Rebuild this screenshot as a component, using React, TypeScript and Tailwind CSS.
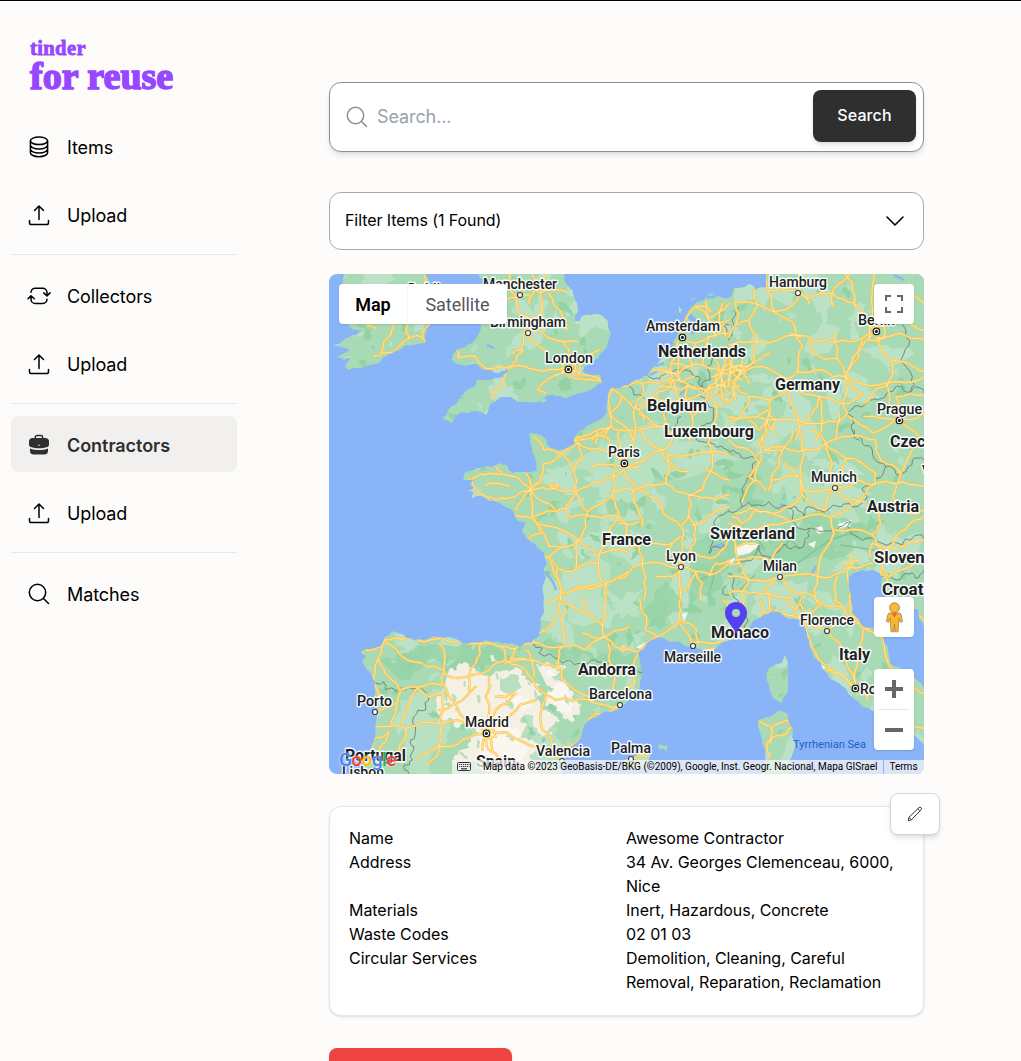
import React from "react";

const LAND = [
  "M345 274 344 290 352 300 340 312 351 328 362 331 352 335 342 342 334 344 345 348 350 350 342 354 336 357 344 360 352 358 345 366 349 370 356 368 379 363 386 356 392 353 406 345 426 343 430 325 431 290 425 274Z",
  "M478 274 492 284 470 290 481 325 479 333 472 343 457 350 452 360 462 365 476 364 486 370 499 373 509 369 502 377 489 380 477 380 474 387 467 390 457 403 448 411 442 418 446 420 452 423 455 416 462 412 474 411 486 415 492 403 501 397 511 397 520 402 529 402 542 400 548 395 558 396 569 397 586 392 602 383 601 375 590 375 582 372 584 367 592 362 599 357 607 347 611 333 607 320 596 314 585 315 581 317 580 321 575 321 578 312 577 303 573 291 567 285 564 274Z",
  "M766 274 766 287 756 290 749 284 740 288 734 288 730 297 718 296 706 298 696 303 686 313 684 323 680 330 676 338 667 353 662 359 654 367 647 375 636 380 629 385 611 388 607 413 598 421 589 425 578 432 574 440 574 445 562 450 555 449 549 447 546 440 542 435 529 434 532 447 535 458 537 470 528 472 522 472 512 473 507 465 499 463 492 467 486 466 475 469 464 473 463 480 474 480 470 484 474 488 466 490 474 493 472 498 482 496 490 501 496 502 504 506 512 510 515 517 522 522 526 522 522 532 526 538 531 542 537 547 544 553 545 559 547 563 544 570 546 577 544 597 541 627 537 638 531 643 519 647 506 643 490 641 476 642 466 644 458 640 442 638 424 640 406 638 402 634 394 631 384 638 379 647 370 649 361 652 366 656 362 661 366 668 372 677 374 697 376 723 371 750 364 774 562 774 558 766 565 758 576 743 589 720 600 714 622 708 640 687 643 672 638 653 647 643 663 638 680 642 693 647 710 652 723 642 743 633 752 622 763 615 772 611 780 612 800 620 807 633 810 646 813 655 821 663 827 673 837 682 847 690 857 701 868 708 887 712 902 730 915 735 924 745 924 688 905 675 890 663 888 648 883 637 873 628 860 623 852 613 851 597 849 577 862 570 876 571 879 573 881 583 886 594 888 604 900 598 918 610 924 627 924 274Z",
  "M785 655 788 669 788 682 782 703 772 697 767 681 769 668 782 663Z",
  "M780 710 788 714 793 729 790 760 793 774 763 774 766 750 758 727 758 720 770 717Z",
  "M624 760 640 752 650 755 646 764 635 770 624 768ZM658 744 668 746 667 751 659 749ZM540 401 545 398 547 401 542 403Z",
  "M679 306 682 310 680 314 679 311ZM690 299 696 297 692 300ZM707 295 715 294 710 296Z",
].join(" ");

type Layer = { x: number; y: number; roads: string; borders: string };

const LAYERS: Layer[] = [
  {
    x: 329,
    y: 270,
    roads:
      "M288 12 286 45M195 165 185 195 165 215 155 250 190 248 225 215 240 205 275 200 292 213M235 165 232 185 240 205M300 165 280 185 280 205M135 257 155 255M385 240 388 263 440 260 450 278 470 295 510 292 550 290 600 293M487 387 497 362 520 345 530 310 555 280 580 245 585 190 600 165M540 12 545 60 562 95 570 130 600 140M115 165 140 175M550 250 580 240M530 90 600 75M555 30 570 60 600 50",
    borders: "",
  },
  {
    x: 529,
    y: 270,
    roads:
      "M0 40 35 70 60 60 110 65M50 12 35 70 40 120 25 180 0 190M10 12 20 50 0 100M60 70 75 105 100 140 115 180M0 190 30 230 60 260M10 180 60 205 105 215 145 215M40 120 20 150 0 140M105 215 120 260 118 298M118 298 60 298 0 295M118 298 60 325 35 345 25 360 50 370M118 298 160 315 195 320 220 335 170 330 120 315M118 298 145 270 190 250 210 240M145 260 145 320M95 270 100 310 135 310 140 285M460 200 465 160 480 130 500 110 530 110 545 125M530 95 545 160 560 200M500 110 540 145 600 100M545 160 600 150M460 200 500 220 540 200 600 190M460 200 435 240 425 290 430 320 420 340M435 240 470 250 510 240 550 245 600 235M430 280 470 290 520 285 600 300M370 300 430 310M500 220 480 260 490 300M540 200 525 250 520 285M580 100 570 150 590 200M430 320 380 340 340 340 280 350 245 360 240 420 245 470 180 495 135 505M245 360 280 380 310 410 330 420 345 450M340 340 345 370 320 410M430 330 410 360 370 380 330 420M430 330 480 345 530 360 560 350 600 330M430 330 440 370 470 400 530 400M370 380 440 395 500 380 530 360M320 410 320 470 310 510M330 430 370 460 410 470 450 500M280 380 240 430 290 470 310 510M245 470 300 480 350 475 410 470M490 440 520 400 540 350 575 310M540 350 560 410 555 460 545 510M475 345 470 400 490 440 480 510M560 410 600 390M575 310 585 350 600 370M560 270 575 310 600 280M410 300 455 335 495 320M400 410 410 470M190 510 245 470 220 500M550 320 600 315M560 340 600 350M570 300 560 370 600 390M590 270 580 380M400 310 450 310 480 290M450 260 450 330M390 350 450 360 500 350",
    borders:
      "M300 345 315 375 345 385M355 315 370 325 390 328 410 312 430 305 470 300 490 315 510 320 520 350 545 330 535 290 550 270 545 240M520 350 515 380 555 415 545 460 510 480M410 430 410 480 440 465 455 440M600 190 585 170 600 165",
  },
  {
    x: 729,
    y: 270,
    roads:
      "M110 12 115 60 135 125 190 155 200 195 220 230 205 305M15 95 75 100 135 125 205 90 210 70 240 85 310 70 315 110M20 165 60 150 85 110 75 60M210 70 150 60 115 60M210 12 215 70 240 100M310 70 330 40 360 15M310 70 375 100 400 130 440 180M350 12 370 60 378 110M435 12 430 60 440 185M0 225 60 215 85 215 200 195 260 215 320 215 400 205 440 185M440 205 585 207M450 200 475 260 490 275 475 345M400 210 390 260 350 320 340 400 355 430M440 185 400 230 360 300M320 190 320 215 325 265 250 250 240 215M325 265 350 320 450 345 510 335 585 320M490 270 540 280 585 305M0 295 60 290 90 270 120 250M85 215 75 270 40 300 15 330M0 310 100 290 170 325 205 305 280 300 350 320M350 320 400 370 360 400 270 380 190 350 170 325M190 350 120 390 115 450 100 510M120 390 60 380 15 350 0 400M180 365 200 430 210 480 200 510M270 380 250 430 210 470M270 380 280 450 260 510M355 430 280 460 115 450 0 440M320 510 330 430M475 345 480 400 510 450M405 440 510 450 585 430M510 450 570 500M510 450 430 490 360 440M510 450 500 380 585 375M475 345 430 370 405 400M0 270 30 300 60 340M10 260 0 330 30 350M15 330 40 310 20 290 0 350M60 380 40 430 0 460M20 100 20 165 0 200M60 150 85 215M60 450 90 480 115 450 140 490M500 60 585 100M520 100 540 160 585 180M0 300 40 330M0 285 35 285 50 310M40 270 30 320 10 350 20 390M85 440 115 420 140 450 130 480M185 190 215 200M420 160 465 170 465 205 420 210 420 160",
    borders:
      "M20 100 20 130 10 155 10 180 0 210M355 430 375 460 370 480 390 510M360 425 375 410 400 410 430 390 460 385 490 365 500 350 520 350 530 365 545 365 560 350 585 370M520 165 530 200 525 250 550 320 545 365",
  },
  {
    x: 529,
    y: 430,
    roads:
      "M15 20 45 60 100 70 135 120 135 180M10 180 35 155 45 100 100 70 150 40 135 30 200 15 240 30 285 100M10 180 75 175 140 185 190 160 285 120M140 185 110 235 50 245 10 265 40 305 0 325M140 185 155 220 175 245 250 195 255 120M110 235 125 262 180 258 260 258 290 280 290 310M175 245 170 290 150 330 110 350 60 350 40 305M10 265 70 290 150 330M150 330 200 375 210 375 215 450 232 465 230 510M265 265 235 320 210 375M250 195 270 265M250 185 310 180 345 170M285 120 300 150 345 185 400 240 445 275 458 290M310 180 315 215 340 290M345 165 410 160 480 195 520 180 530 150M285 115 350 90 400 60 350 30 340 0M285 100 310 50 320 0M285 100 200 55 150 40M270 0 275 60 285 100M200 40 205 0M400 60 435 110 475 125M400 60 430 20 440 0M415 75 480 75 540 68 600 75M415 70 410 160M545 0 550 70 530 150M530 120 600 150M480 195 480 240 458 290 460 350 455 410M480 260 500 290 500 330 480 370 455 410M480 195 560 210 600 195M490 285 540 260 600 230M455 410 400 400 340 400 330 350 290 310M455 410 455 510M455 410 500 425 540 435 600 400M500 425 520 460 515 510M340 400 350 440 345 510M232 465 290 440 340 400M232 465 150 470 100 490 80 440 60 380 100 350M85 415 140 420 175 400 210 400M140 420 145 330M458 380 500 370 560 380M365 340 430 340 455 320M215 370 290 365 335 345M270 280 330 275M430 340 410 370 440 400M500 430 480 470 455 490M540 435 560 400 600 390M560 380 590 350 600 310M380 440 430 440 455 420M150 40 160 80 135 120M190 110 255 105 330 110M75 175 60 165 90 165 75 175",
    borders: "M500 25 520 35 540 30 560 50 580 50 600 60M600 240 580 255 560 290 545 350 540 370 555 350 590 345M590 470 580 490 600 495",
  },
  {
    x: 329,
    y: 430,
    roads:
      "M430 145 480 130 560 140 605 180M420 145 450 190 500 210 560 200 605 180M470 165 540 168M605 180 610 260M605 180 560 240M605 180 680 240M500 110 520 130M605 180 590 130M640 150 605 180M560 255 615 265 640 310M650 380 685 410 695 500 660 590 610 640M690 500 740 535 815 580 825 620 770 660 700 650 610 635M710 535 705 640M710 490 760 475 830 460 900 425M830 460 830 560 820 590M825 620 870 600 900 590M825 620 870 655 900 655M837 640 840 690 855 720 850 780M760 505 775 545M760 610 825 620M655 520 690 500M610 640 560 655 520 650 460 640 400 635 340 625 230 625 165 630 150 680 135 740 140 840 130 950 150 1000M165 630 205 660 220 680 280 700M110 660 165 640M150 690 180 740 210 780 340 765 345 720 330 640M285 705 340 720M345 730 430 735 480 720 530 690 520 650M455 640 440 700 420 780M530 690 600 740 620 770 680 810 780 810 870 830M525 700 600 690 690 715 700 715M590 660 610 690 615 740M550 685 590 685M560 655 545 690M700 715 700 750 780 800M480 740 470 800 475 900M475 905 380 820 345 765M330 840 380 820 440 770M475 905 500 840 560 790M475 905 540 860 620 810M640 900 640 830 650 800M475 905 400 930 330 950 270 980M475 905 480 960 530 1020M475 905 580 935 640 960 700 990M640 900 680 970 740 940 800 850 870 830M140 890 230 895 330 880 340 790 300 800 265 775M265 775 240 830 220 880M215 785 200 840 185 880M230 895 210 960 220 1000M330 880 440 880 475 905M340 880 330 960 300 1000M500 800 560 790M455 890 495 890 500 920 470 930 455 890M460 960 475 905 490 960M130 930 180 905 150 960M135 760 150 790 140 840 200 820M685 720 690 660 700 650",
    borders:
      "M605 640 640 655 630 670 690 690 700 700 750 700 800 690 820 700 850 715M120 780 140 760 165 755 170 780 200 785 230 780 270 770 300 800 290 840 255 860 260 900 245 930 255 950 250 990 225 1005 240 1030",
  },
  {
    x: 729,
    y: 430,
    roads:
      "M0 30 60 60 90 100 80 150 50 190 40 215M115 0 90 40 90 100M210 0 225 70 215 150 220 195 185 230M100 20 110 60 210 65 290 40 360 20 440 30M290 40 250 0M290 40 350 85 440 130 440 160 500 160 585 170M290 40 310 100 318 170M160 60 190 0M110 60 160 60 150 110 120 180M130 150 210 140 165 100M215 150 220 180 318 175M318 175 290 240 220 195M318 175 350 210 410 215M350 85 330 130 318 170M318 175 390 150 440 160M440 160 400 200 350 240 305 262 180 275 130 250M20 250 60 235 130 250 180 230M0 280 50 300 180 275M10 260 40 280 80 240 120 250M305 262 315 310 270 400 265 440M315 300 430 315 455 280 450 250M430 315 460 370 500 320 560 270 585 260M585 330 430 340 425 380M0 440 60 450 153 440 270 440 330 430 400 410 430 400M153 440 110 480 120 540M153 440 200 490 300 530 350 535M30 400 60 450 40 490 50 540M265 440 265 520M325 440 320 510M365 370 370 400 355 440 360 520M340 400 390 390M460 400 480 440 560 400 585 395M0 490 60 490 120 490 190 500M155 440 120 390 20 390M130 385 160 340M455 90 515 130 550 60M440 30 455 90M500 160 490 200 550 250M90 100 60 140 110 180M510 120 510 160M540 250 585 240M20 350 80 340M0 400 30 400 20 340 0 320M220 500 200 540M460 380 455 430 480 470",
    borders:
      "M0 65 30 70 50 85 85 85 70 110 50 160 40 230 0 245M40 230 80 225 120 215 150 235 185 235 215 245 225 260 240 230 270 240 330 230 360 220 405 215 415 200 400 175 440 160 440 145 470 110 455 100 430 60 400 40 375 0M470 110 500 130 520 130 550 90 585 90M20 385 40 395 80 370 90 345 130 385 160 345 180 355 210 355 240 320 240 295 200 290 190 270 185 235M240 295 270 305 330 290 365 275 355 290 375 315 430 325 520 345 550 325 585 325M460 440 480 435 490 445 530 430 560 445 585 420M0 430 15 450 10 490 20 540",
  },
  {
    x: 620,
    y: 600,
    roads:
      "M0 150 55 155 110 110 180 60 180 0M180 70 215 130 300 125 345 95 400 80 430 35 470 30 540 55 560 60 570 120 590 165 620 200 705 265 745 300M60 0 80 50 75 90 110 110M180 60 230 90 235 130M540 55 500 0M560 60 620 90 660 130 680 190 705 265M620 90 700 60 790 120 805 190 820 210M690 0 690 40 750 90M610 10 560 40 540 10M620 210 660 220 705 265M55 160 45 250 0 290M420 365 455 385 500 360 515 380 500 400 440 430 450 470M455 385 450 430M885 265 912 280M885 380 912 385M730 90 710 200 705 265M310 0 340 50M430 35 420 0M20 480 60 465 80 470M640 0 700 60M840 0 880 20 912 60M230 150 290 145",
    borders: "M55 215 70 215M360 100 380 70 370 30",
  },
];

/* Midpoint displacement: turns coarse polylines into natural looking ones.
   Axis-aligned segments are kept straight, as they run along the map's frame. */
function roughen(path: string, amount: number, minLength: number, depth: number, keepAxes = false) {
  const noise = (a: number, b: number) => {
    const v = Math.sin(a * 12.9898 + b * 78.233) * 43758.5453;
    return v - Math.floor(v) - 0.5;
  };
  const split = (x1: number, y1: number, x2: number, y2: number, d: number): string => {
    const dx = x2 - x1;
    const dy = y2 - y1;
    if (d === 0 || Math.hypot(dx, dy) < minLength) return ` ${x2.toFixed(1)} ${y2.toFixed(1)}`;
    if (keepAxes && (dx === 0 || dy === 0)) return ` ${x2} ${y2}`;
    const k = noise(x1 + x2, y1 + y2) * amount;
    const mx = (x1 + x2) / 2 - dy * k;
    const my = (y1 + y2) / 2 + dx * k;
    return split(x1, y1, mx, my, d - 1) + split(mx, my, x2, y2, d - 1);
  };
  return path
    .split("M")
    .filter((s) => s.trim())
    .map((s) => {
      const closed = s.includes("Z");
      const n = s.replace("Z", "").trim().split(/\s+/).map(Number);
      let out = `M${n[0]} ${n[1]}`;
      for (let i = 2; i < n.length; i += 2) out += split(n[i - 2], n[i - 1], n[i], n[i + 1], depth);
      return closed ? out + "Z" : out;
    })
    .join("");
}

/* Deterministic patches scattered over a rectangle of the map. */
function patches(seed: number, count: number, min: number, max: number, box = [329, 274, 595, 500]) {
  let s = seed;
  const rnd = () => {
    s = (s * 16807) % 2147483647;
    return s / 2147483647;
  };
  const out: string[] = [];
  for (let i = 0; i < count; i++) {
    const cx = box[0] + rnd() * box[2];
    const cy = box[1] + rnd() * box[3];
    const r = min + rnd() * (max - min);
    const tilt = rnd() * 3.14;
    const pts: string[] = [];
    for (let k = 0; k < 13; k++) {
      const a = (k / 13) * Math.PI * 2;
      const q = r * (0.45 + rnd() * 0.75);
      const px = Math.cos(a) * q * 1.5;
      const py = Math.sin(a) * q * 0.7;
      pts.push(
        `${(cx + px * Math.cos(tilt) - py * Math.sin(tilt)).toFixed(1)} ${(cy + px * Math.sin(tilt) + py * Math.cos(tilt)).toFixed(1)}`,
      );
    }
    out.push(`M${pts.join(" ")}Z`);
  }
  return out.join("");
}

const COAST = roughen(LAND, 0.3, 5, 2, true);
const NETWORK = LAYERS.map((l) => ({
  ...l,
  roads: roughen(l.roads, 0.28, 18, 2),
  borders: roughen(l.borders, 0.6, 10, 2),
}));

const LIGHT = patches(71, 170, 6, 22);
const DARK = patches(913, 260, 1.5, 7);
const PALE = patches(4021, 190, 1.5, 6);

const LOWLANDS = roughen(
  "M540 480 575 470 610 475 600 500 590 560 560 580 545 600 600 620 610 580 640 500 680 480 720 440 650 420 610 440ZM780 460 850 470 860 520 790 515ZM750 590 800 585 850 600 845 620 780 600ZM400 700 440 690 450 720 430 774 410 774Z",
  0.6,
  5,
  3,
);

const MOUNTAINS = roughen(
  "M540 645 580 650 640 655 630 670 600 665 560 660ZM380 660 430 645 500 650 510 660 440 662 400 680ZM605 500 622 498 628 510 625 518 608 516ZM740 500 752 470 762 478 750 505ZM690 560 740 530 800 525 870 530 880 550 830 560 760 560 720 590 690 610ZM640 610 665 580 680 610 660 630Z",
  0.6,
  5,
  3,
);

const PLATEAU = roughen(
  "M449 670 462 664 475 668 482 675 500 672 512 670 526 676 540 684 535 700 548 712 560 720 552 735 537 728 530 715 520 722 524 735 536 745 530 758 540 774 460 774 455 755 470 748 480 735 470 722 456 728 448 718 437 712 442 690 445 684ZM536 664 548 662 556 668 566 684 560 694 546 684ZM548 690 566 680 574 700 580 714 572 724 560 712 545 706ZM556 662 566 668 558 672ZM620 648 627 644 624 652ZM490 655 498 662 492 662Z",
  0.8,
  3,
  3,
);

const PLATEAU_LIGHT = roughen(
  "M480 740 495 728 520 735 528 750 510 765 480 765ZM545 695 568 688 572 712 555 705ZM506 695 520 688 530 700 512 708ZM543 668 552 670 556 680 548 678Z",
  0.8,
  3,
  3,
);

const PLATEAU_GREEN =
  roughen("M500 676 515 674 520 685 512 696 500 690Z", 0.7, 3, 3) + patches(557, 26, 1.5, 5, [445, 670, 125, 90]);

type Kind = "city" | "country" | "sea";
const LABELS: [string, number, number, number, Kind][] = [
  ["Dublin", 408, 294, 40, "city"],
  ["Manchester", 483, 289, 74, "city"],
  ["Birmingham", 490, 327, 76, "city"],
  ["London", 545, 363, 48, "city"],
  ["Amsterdam", 646, 331, 74, "city"],
  ["Netherlands", 658, 356, 88, "country"],
  ["Hamburg", 769, 287, 58, "city"],
  ["Berlin", 858, 325, 37, "city"],
  ["Germany", 775, 389, 65, "country"],
  ["Belgium", 647, 410, 60, "country"],
  ["Luxembourg", 664, 436, 90, "country"],
  ["Prague", 877, 414, 45, "city"],
  ["Czechia", 890, 446, 57, "country"],
  ["Vienna", 922, 476, 45, "city"],
  ["Paris", 608, 457, 32, "city"],
  ["Munich", 811, 482, 46, "city"],
  ["Austria", 867, 511, 52, "country"],
  ["Switzerland", 710, 538, 85, "country"],
  ["France", 602, 544, 49, "country"],
  ["Lyon", 666, 561, 30, "city"],
  ["Milan", 763, 571, 34, "city"],
  ["Slovenia", 874, 562, 64, "country"],
  ["Croatia", 882, 594, 55, "country"],
  ["Florence", 800, 625, 54, "city"],
  ["Monaco", 711, 637, 58, "country"],
  ["Marseille", 664, 662, 57, "city"],
  ["Italy", 839, 659, 31, "country"],
  ["Rome", 860, 694, 36, "city"],
  ["Andorra", 578, 674, 58, "country"],
  ["Barcelona", 589, 699, 63, "city"],
  ["Porto", 357, 706, 35, "city"],
  ["Madrid", 465, 727, 44, "city"],
  ["Valencia", 536, 756, 54, "city"],
  ["Palma", 611, 753, 40, "city"],
  ["Portugal", 345, 760, 61, "country"],
  ["Spain", 476, 766, 40, "country"],
  ["Lisbon", 342, 777, 42, "city"],
  ["Tyrrhenian Sea", 793, 747.5, 73, "sea"],
];

const CAPITALS = [[568, 369], [682, 337], [876, 331], [899, 420], [624, 463], [855, 688], [486, 733]];
const TOWNS = [[520, 295], [528, 333], [798, 293], [835, 488], [681, 567], [780, 577], [827, 631], [693, 646], [620, 705], [375, 712], [562, 761], [631, 759]];

function MapCanvas() {
  return (
    <svg viewBox="329 274 595 500" className="block h-[500px] w-full font-['Roboto',sans-serif]" aria-hidden="true">
      <defs>
        <clipPath id="land">
          <path d={COAST} />
        </clipPath>
      </defs>
      <rect x="329" y="274" width="595" height="500" fill="#8ab4f8" />
      <path d={COAST} fill="#a8dab5" />
      <g clipPath="url(#land)">
        <path d={LIGHT} fill="#bbe2c6" />
        <path d={LOWLANDS} fill="#bbe2c6" opacity="0.8" />
        <path d={DARK} fill="#94d2a5" />
        <path d={MOUNTAINS} fill="#94d2a5" opacity="0.75" />
        <path d={PALE} fill="#bbe2c6" opacity="0.8" />
        <path d={PLATEAU} fill="#f5f0e4" />
        <path d={PLATEAU_LIGHT} fill="#faf7f1" />
        <path d={PLATEAU_GREEN} fill="#b9dfbe" />
        <path d="M735 548 752 542 760 545 750 553 738 556ZM815 528 822 526 824 532 818 534ZM838 524 852 520 850 526 840 528ZM808 544 816 541 814 548ZM726 562 738 556 730 566ZM682 614 688 612 684 622ZM636 647 648 641 642 650ZM818 662 826 668 822 670Z" fill="#f4f6f0" />
        <path d="M740 545 755 535 765 550M770 560 790 540 800 548M795 565 830 540 860 530M700 580 715 572 710 590M840 545 875 550M755 575 740 590" fill="none" stroke="#84c398" strokeWidth="1.500" />
        <path d="M545 571 553 582 556 590M712 547 722 544 728 547M780 504 790 508M811 575 816 566M685 390 680 395" fill="none" stroke="#8ab4f8" strokeWidth="2.200" />
        <path d="M686 313 694 320 690 328 694 333" fill="none" stroke="#8ab4f8" strokeWidth="5" />
        <path d="M656 366 664 363M650 375 658 371M487 345 494 348M894 275 904 280" fill="none" stroke="#8ab4f8" strokeWidth="2" />
        {NETWORK.map((l, i) => (
          <g key={i} transform={`translate(${l.x} ${l.y}) scale(0.33333)`} fill="none" strokeLinejoin="round" strokeLinecap="round">
            <path d={l.borders} stroke="#6f8378" strokeWidth="2.800" />
            <path d={l.roads} stroke="#fdc650" strokeWidth="7.200" />
            <path d={l.roads} stroke="#ffeeb3" strokeWidth="2.400" />
          </g>
        ))}
      </g>
      {TOWNS.map(([x, y]) => (
        <circle key={`${x}-${y}`} cx={x} cy={y} r="2.500" fill="#fff" stroke="#3c4043" strokeWidth="1.200" />
      ))}
      {CAPITALS.map(([x, y]) => (
        <g key={`${x}-${y}`} transform="translate(0.4 0.4)">
          <circle cx={x} cy={y} r="3.200" fill="#fff" stroke="#202124" strokeWidth="1.300" />
          <circle cx={x} cy={y} r="1.600" fill="#202124" />
        </g>
      ))}
      {LABELS.map(([text, x, y, w, kind]) => (
        <text
          key={text}
          x={x}
          y={kind === "country" ? y + 1 : y + 0.4}
          textLength={w}
          lengthAdjust="spacingAndGlyphs"
          fontSize={kind === "country" ? 16 : kind === "city" ? 14 : 11}
          fontWeight={kind === "country" ? 700 : kind === "city" ? 500 : 400}
          fill={kind === "sea" ? "#2362c4" : "#202124"}
          stroke={kind === "sea" ? "none" : "#ffffff"}
          strokeWidth={kind === "sea" ? 0 : 2.8}
          strokeOpacity="0.9"
          strokeLinejoin="round"
          paintOrder="stroke"
        >
          {text}
        </text>
      ))}
      <path d="M736 634C734 627 725 621 725 613a11 11 0 0 1 22 0c0 8-9 14-11 21Z" fill="#5540f5" />
      <circle cx="736" cy="613" r="4" fill="#a8dab5" />
    </svg>
  );
}

function UploadIcon() {
  return (
    <svg className="size-6" viewBox="0 0 24 24" fill="none" stroke="currentColor" strokeWidth="1.5" strokeLinecap="round" strokeLinejoin="round">
      <path d="M12 16.500V3.200M7.500 7.500 12 3l4.500 4.500M2.500 17.500v2.200c0 1.100.8 1.800 1.800 1.800h15.400c1 0 1.800-.7 1.800-1.800v-2.200" />
    </svg>
  );
}

function DatabaseIcon() {
  return (
    <svg className="size-6" viewBox="0 0 24 24" fill="none" stroke="currentColor" strokeWidth="1.5">
      <ellipse cx="12" cy="5.800" rx="8.600" ry="3.800" />
      <path d="M3.400 6v11.700c0 2.200 3.800 4 8.600 4s8.600-1.800 8.600-4V6M3.400 10c0 2.200 3.800 4 8.600 4s8.600-1.800 8.600-4M3.400 14c0 2.200 3.800 4 8.600 4s8.600-1.800 8.600-4" />
    </svg>
  );
}

function CycleIcon() {
  return (
    <svg className="size-6" viewBox="0 0 24 24" fill="none" stroke="currentColor" strokeWidth="1.5" strokeLinecap="round" strokeLinejoin="round">
      <path d="M4 8.300A4.300 4.300 0 0 1 8.300 4.200h7.400A4.300 4.300 0 0 1 20 8.500v3.200M16.700 8.900l3.300 3 3-3M20 15.300a4.300 4.300 0 0 1-4.300 4.200H8.300A4.300 4.300 0 0 1 4 15.200V12M1 14.700l3-3 3.300 3" />
    </svg>
  );
}

function BriefcaseIcon() {
  return (
    <svg className="size-6" viewBox="0 0 24 24">
      <path d="M8.300 5.200V4.300c0-1 .7-1.700 1.700-1.700h4c1 0 1.700.7 1.700 1.700v.9" fill="none" stroke="#2f2f2f" strokeWidth="1.500" />
      <path d="M5.500 5h13c2 0 3.500 1.500 3.500 3.500v3.300c0 1-.6 1.800-1.600 2.200-5.200 1.800-11.600 1.800-16.800 0C2.600 13.600 2 12.800 2 11.800V8.500C2 6.500 3.500 5 5.500 5Z" fill="#2f2f2f" />
      <path d="M3 15.600c5.600 2 12.400 2 18 0v2.500c0 2-1.400 3.400-3.400 3.400H6.400C4.400 21.500 3 20.100 3 18.100Z" fill="#2f2f2f" />
      <circle cx="12" cy="12.200" r=".8" fill="#d8d8d8" />
    </svg>
  );
}

function SearchIcon() {
  return (
    <svg className="size-6" viewBox="0 0 24 24" fill="none" stroke="currentColor" strokeWidth="1.5" strokeLinecap="round">
      <circle cx="10.500" cy="10.500" r="8.200" />
      <path d="m16.500 16.500 5 5" />
    </svg>
  );
}

function NavItem({ icon, label, active }: { icon: React.ReactNode; label: string; active?: boolean }) {
  return (
    <a
      className={
        active
          ? "mb-3 flex h-14 items-center gap-4 rounded-lg bg-[#f1f0ef] pl-4 text-lg font-semibold tracking-[-0.05px] text-[#2f2f2f]"
          : "mb-3 flex h-14 items-center gap-4 rounded-lg pl-4 text-lg tracking-[-0.1px] text-black"
      }
    >
      <span className="pt-0.5">{icon}</span>
      <span className="pt-1">{label}</span>
    </a>
  );
}

const ROWS: [string, string][] = [
  ["Name", "Awesome Contractor"],
  ["Address", "34 Av. Georges Clemenceau, 6000, Nice"],
  ["Materials", "Inert, Hazardous, Concrete"],
  ["Waste Codes", "02 01 03"],
  ["Circular Services", "Demolition, Cleaning, Careful Removal, Reparation, Reclamation"],
];

export default function App() {
  return (
    <div className="flex h-[1061px] overflow-hidden border-t border-black bg-[#fdfcfb] font-['Inter',sans-serif] text-black">
      <aside className="ml-[11px] w-[226px] shrink-0 pt-9">
        <div className="ml-[19px] h-[81px] pt-px font-['Liberation_Serif',serif] font-bold text-[#9747ff]">
          <div className="h-5 text-[20.5px] leading-[21px] tracking-[0.4px] [-webkit-text-stroke:0.8px_#9747ff]">tinder</div>
          <div className="text-[38px] leading-[37px] whitespace-nowrap [-webkit-text-stroke:1.5px_#9747ff]">for reuse</div>
        </div>
        <nav>
          <NavItem icon={<DatabaseIcon />} label="Items" />
          <NavItem icon={<UploadIcon />} label="Upload" />
          <hr className="mb-3 border-gray-200" />
          <NavItem icon={<CycleIcon />} label="Collectors" />
          <NavItem icon={<UploadIcon />} label="Upload" />
          <hr className="mb-3 border-gray-200" />
          <NavItem icon={<BriefcaseIcon />} label="Contractors" active />
          <NavItem icon={<UploadIcon />} label="Upload" />
          <hr className="mb-3 border-gray-200" />
          <NavItem icon={<SearchIcon />} label="Matches" />
        </nav>
      </aside>

      <main className="ml-[92px] w-[595px] shrink-0 pt-[81px]">
        <div className="flex h-[70px] items-center rounded-xl border border-[#8e8e8e] bg-white pr-[7px] pl-[15px] shadow-md">
          <span className="text-[#8e8e8e]">
            <SearchIcon />
          </span>
          <span className="ml-2 flex-1 text-lg tracking-[-0.1px] text-gray-400">Search...</span>
          <button className="mb-0.5 h-[52px] w-[103px] rounded-lg bg-[#2f2f2f] pb-0.5 text-base font-medium tracking-[0.1px] text-white shadow-md">Search</button>
        </div>

        <div className="mt-10 flex h-[58px] items-center justify-between rounded-xl border border-[#aaa] bg-white pr-[18px] pl-[15px]">
          <span className="pb-0.5 text-base tracking-[-0.08px]">Filter Items (1 Found)</span>
          <svg className="size-5" viewBox="0 0 20 20" fill="none" stroke="currentColor" strokeWidth="1.6" strokeLinecap="round" strokeLinejoin="round">
            <path d="m2 6 8 8 8-8" />
          </svg>
        </div>

        <div className="relative mt-6 h-[500px] overflow-hidden rounded-lg font-['Roboto',sans-serif]">
          <MapCanvas />
          <div className="absolute top-[10px] left-[10px] flex h-10 rounded-sm bg-white pt-0.5 text-lg tracking-[-0.05px] shadow">
            <div className="flex w-[69px] items-center justify-center border-r border-gray-100 font-semibold text-black">Map</div>
            <div className="flex w-[99px] items-center justify-center text-[#565656]">Satellite</div>
          </div>
          <div className="absolute top-[10px] right-[10px] flex size-10 items-center justify-center rounded-sm bg-white shadow">
            <svg className="size-[18px]" viewBox="0 0 18 18" fill="none" stroke="#666" strokeWidth="2">
              <path d="M1 6V1h5M12 1h5v5M17 12v5h-5M6 17H1v-5" />
            </svg>
          </div>
          <div className="absolute right-[10px] bottom-[137px] flex size-10 items-center justify-center rounded-sm bg-white shadow">
            <svg className="h-[31px] w-[19px]" viewBox="0 0 19 31">
              <circle cx="9.500" cy="5.700" r="4.900" fill="#fbbc2d" stroke="#8f7a4a" strokeWidth=".8" />
              <path d="M5 11h9c1.400 0 2 .8 2.300 2.200l1.200 6.300-2.200.8-1.500-4-.8 13.500h-3L9.500 22 9 29.800H6L5.200 16.300l-1.500 4-2.200-.8 1.200-6.300C3 11.800 3.600 11 5 11Z" fill="#fbb52b" stroke="#8f7a4a" strokeWidth=".7" />
              <path d="m6 11 3.500 4.500L13 11Z" fill="#e87425" />
            </svg>
          </div>
          <div className="absolute right-[10px] bottom-6 flex h-[81px] w-10 flex-col items-center rounded-sm bg-white shadow">
            <svg className="h-10 w-[18px]" viewBox="0 0 18 40" stroke="#666" strokeWidth="4">
              <path d="M0 20h18M9 11v18" />
            </svg>
            <div className="h-px w-[30px] bg-gray-200" />
            <svg className="h-10 w-[18px]" viewBox="0 0 18 40" stroke="#666" strokeWidth="4">
              <path d="M0 20h18" />
            </svg>
          </div>
          <div className="absolute bottom-[2px] left-[10px] flex text-[19px] leading-6 font-medium tracking-[-0.6px] whitespace-nowrap">
            <span className="relative z-[6] text-[#4285f4] [text-shadow:0_0_2px_white]">G</span>
            <span className="relative z-[5] text-[#ea4335] [text-shadow:0_0_2px_white]">o</span>
            <span className="relative z-[4] text-[#fbbc05] [text-shadow:0_0_2px_white]">o</span>
            <span className="relative z-[3] text-[#4285f4] [text-shadow:0_0_2px_white]">g</span>
            <span className="relative z-[2] text-[#34a853] [text-shadow:0_0_2px_white]">l</span>
            <span className="relative z-[1] text-[#ea4335] [text-shadow:0_0_2px_white]">e</span>
          </div>
          <div className="absolute right-0 bottom-0 flex h-[14px] w-[472px] items-center bg-[#f5f5f5]/75 pb-px text-[10px] whitespace-nowrap text-black">
            <svg className="ml-[5px] h-[9px] w-[14px]" viewBox="0 0 14 9">
              <rect x=".5" y=".5" width="13" height="8" rx="1" fill="#eee" stroke="#333" />
              <path d="M2 2.500h10.500M2 4.500h10.500" stroke="#333" strokeWidth="1.200" strokeDasharray="1.200 .8" />
              <path d="M4 6.800h6" stroke="#333" strokeWidth="1.200" />
            </svg>
            <span className="ml-3">Map data ©2023 GeoBasis-DE/BKG (©2009), Google, Inst. Geogr. Nacional, Mapa GISrael</span>
            <span className="absolute right-0 flex h-[14px] w-[41px] items-center justify-center border-l border-[#8ab4f8] pr-px">Terms</span>
          </div>
        </div>

        <div className="relative mt-8 h-[210px] rounded-xl border border-gray-200 bg-white px-5 pt-[19px] shadow-sm">
          <dl className="-ml-px text-base tracking-[-0.05px]">
            {ROWS.map(([k, v]) => (
              <div key={k} className="grid grid-cols-2">
                <dt>{k}</dt>
                <dd>{v}</dd>
              </div>
            ))}
          </dl>
          <button className="absolute -top-[14px] -right-[17px] flex h-[42px] w-[50px] items-center justify-center rounded-lg border border-gray-300 bg-white shadow-md">
            <svg className="size-4" viewBox="0 0 16 16" fill="none" stroke="#333" strokeWidth="1" strokeLinejoin="round">
              <path d="M1.200 14.800 1.900 11.400 11.900 1.700a1.300 1.300 0 0 1 2.200 2L4.500 13.700ZM10.900 2.700l2 2M1.900 11.400l2.600 2.300" />
            </svg>
          </button>
        </div>

        <div className="mt-8 h-14 w-[183px] rounded-lg bg-[#ef4444] shadow" />
      </main>
    </div>
  );
}
